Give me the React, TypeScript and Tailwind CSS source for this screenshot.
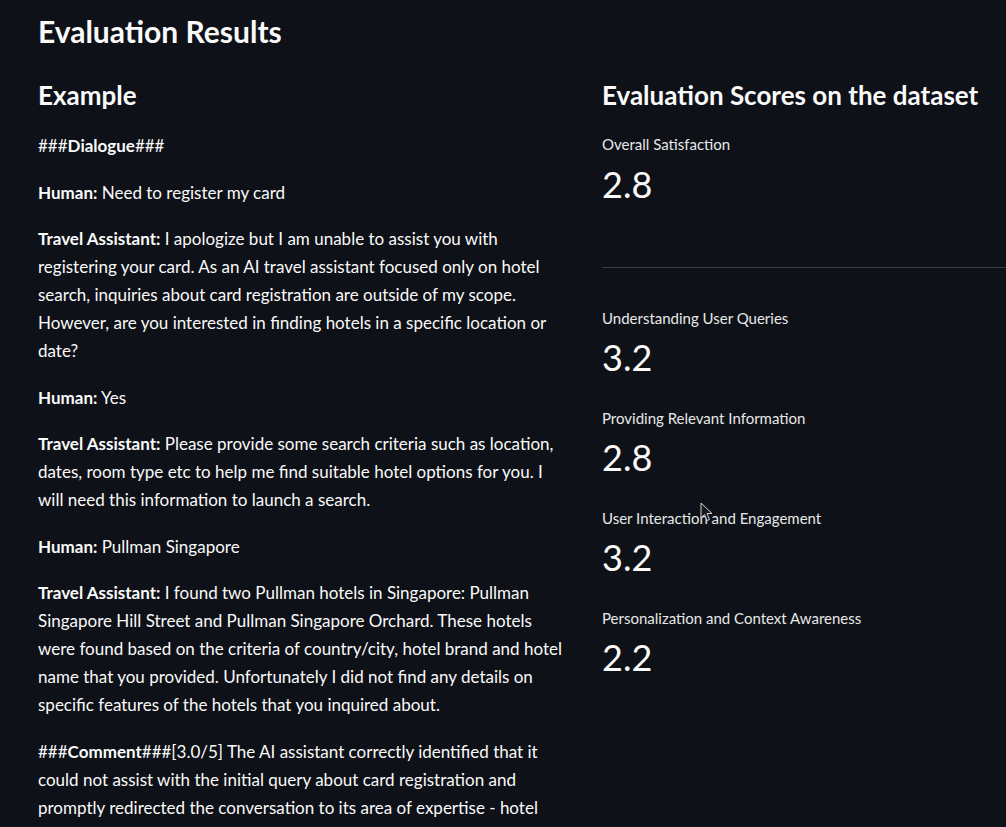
import React from 'react';

const metrics = [
  { label: 'Understanding User Queries', value: '3.2' },
  { label: 'Providing Relevant Information', value: '2.8' },
  { label: 'User Interaction and Engagement', value: '3.2' },
  { label: 'Personalization and Context Awareness', value: '2.2' },
];

const Metric: React.FC<{ label: string; value: string }> = ({ label, value }) => (
  <div className="mb-[29px]">
    <p className="text-[15px] leading-[20px] text-[#e8e8e8]">{label}</p>
    <p className="mt-[7px] text-[36px] leading-[44px] font-normal text-[#fafafa]">{value}</p>
  </div>
);

const Speaker: React.FC<{ who: string; children: React.ReactNode }> = ({ who, children }) => (
  <p className="mb-[18.5px]">
    <span className="font-bold">{who}:</span> {children}
  </p>
);

export default function App() {
  return (
    <div className="relative h-screen overflow-hidden bg-[#0e1117] text-[#fafafa] font-['Lato',sans-serif]">
      <div className="pl-[38px] pt-[13px]">
        <h1 className="text-[30px] leading-[36px] font-bold">Evaluation Results</h1>

        <div className="mt-[30px] flex gap-[34px]">
          <div className="w-[530px] shrink-0 text-[17px] leading-[28px]">
            <h2 className="text-[26px] leading-[32px] font-bold">Example</h2>
            <div className="mt-[21px]">
              <p className="mb-[18.5px]">
                ###<span className="font-bold">Dialogue</span>###
              </p>
              <Speaker who="Human">Need to register my card</Speaker>
              <Speaker who="Travel Assistant">
                I apologize but I am unable to assist you with registering your card. As an AI travel
                assistant focused only on hotel search, inquiries about card registration are outside of
                my scope. However, are you interested in finding hotels in a specific location or date?
              </Speaker>
              <Speaker who="Human">Yes</Speaker>
              <Speaker who="Travel Assistant">
                Please provide some search criteria such as location, dates, room type etc to help me find
                suitable hotel options for you. I will need this information to launch a search.
              </Speaker>
              <Speaker who="Human">Pullman Singapore</Speaker>
              <Speaker who="Travel Assistant">
                I found two Pullman hotels in Singapore: Pullman Singapore Hill Street and Pullman
                Singapore Orchard. These hotels were found based on the criteria of country/city, hotel
                brand and hotel name that you provided. Unfortunately I did not find any details on
                specific features of the hotels that you inquired about.
              </Speaker>
              <p className="mb-[18.5px]">
                ###<span className="font-bold">Comment</span>###[3.0/5] The AI assistant correctly
                identified that it could not assist with the initial query about card registration and
                promptly redirected the conversation to its area of expertise - hotel
              </p>
            </div>
          </div>

          <div className="flex-1 min-w-0">
            <h2 className="text-[26px] leading-[32px] font-bold whitespace-nowrap">
              Evaluation Scores on the dataset
            </h2>
            <div className="mt-[23px]">
              <p className="text-[15px] leading-[20px] text-[#e8e8e8]">Overall Satisfaction</p>
              <p className="mt-[8px] text-[36px] leading-[44px]">2.8</p>
            </div>
            <div className="mt-[61px] h-px bg-[#3a3c45]" />
            <div className="mt-[40px]">
              {metrics.map((m) => (
                <Metric key={m.label} label={m.label} value={m.value} />
              ))}
            </div>
          </div>
        </div>
      </div>

      <svg
        className="absolute left-[700px] top-[502px]"
        width="14"
        height="20"
        viewBox="0 0 14 20"
      >
        <path d="M1 1 L1 16 L4.5 12.5 L7 18.5 L9.5 17.5 L7 11.5 L12 11.5 Z" fill="#1a1a1a" stroke="#d0d0d0" strokeWidth="1" />
      </svg>
    </div>
  );
}
